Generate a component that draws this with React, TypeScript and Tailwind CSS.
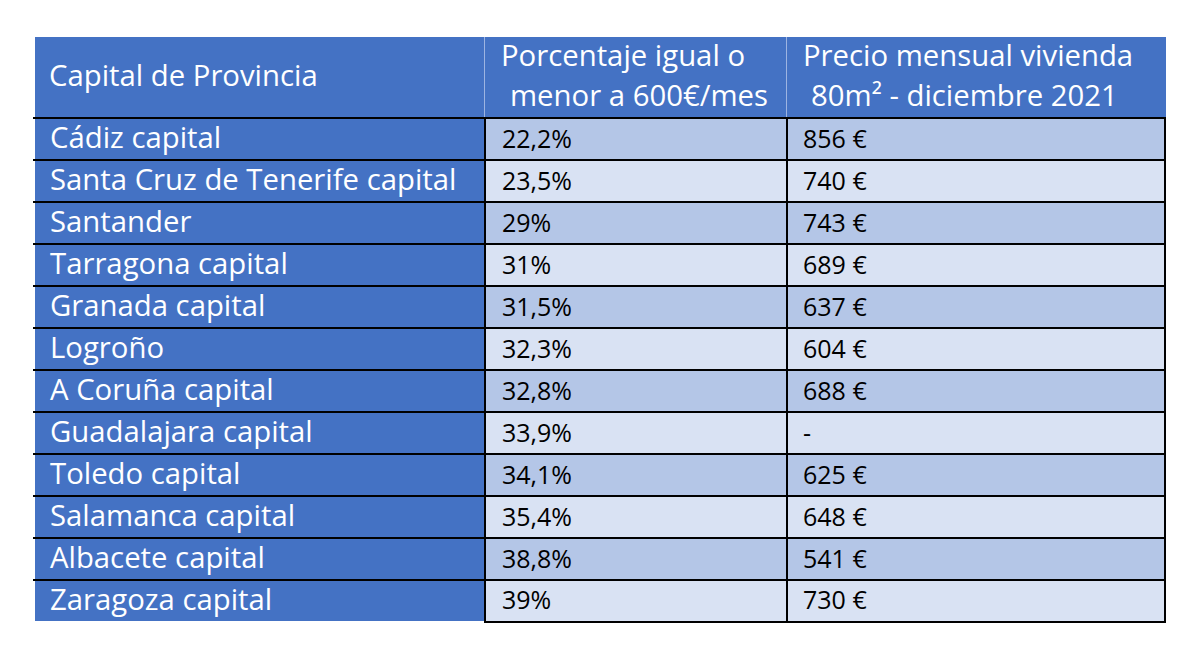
const rows = [
  ['Cádiz capital', '22,2%', '856 €'],
  ['Santa Cruz de Tenerife capital', '23,5%', '740 €'],
  ['Santander', '29%', '743 €'],
  ['Tarragona capital', '31%', '689 €'],
  ['Granada capital', '31,5%', '637 €'],
  ['Logroño', '32,3%', '604 €'],
  ['A Coruña capital', '32,8%', '688 €'],
  ['Guadalajara capital', '33,9%', '-'],
  ['Toledo capital', '34,1%', '625 €'],
  ['Salamanca capital', '35,4%', '648 €'],
  ['Albacete capital', '38,8%', '541 €'],
  ['Zaragoza capital', '39%', '730 €'],
];

export default function App() {
  return (
    <div className="w-[1199px] h-[652px] bg-white pt-[37px] pl-[33px] font-['Open_Sans','Noto_Sans',sans-serif]">
      <div className="w-[1133px]">
        {/* header */}
        <div className="ml-[2px] flex h-[80px] bg-[#4472C4] text-white text-[29.3px]">
          <div className="w-[450px] flex items-center pl-[14px] pb-[3px] border-r border-[#9DB4E2]">
            Capital de Provincia
          </div>
          <div className="w-[302px] flex flex-col justify-center leading-[40px] pb-[5px] border-r border-[#9DB4E2]">
            <span className="pl-[16px]">Porcentaje igual o</span>
            <span className="pl-[25px]">menor a 600€/mes</span>
          </div>
          <div className="flex-1 flex flex-col justify-center leading-[40px] pb-[5px]">
            <span className="pl-[16px]">Precio mensual vivienda</span>
            <span className="pl-[24px]">80m² - diciembre 2021</span>
          </div>
        </div>

        {rows.map(([city, pct, price], i) => {
          const last = i === rows.length - 1;
          const bg = i % 2 === 0 ? 'bg-[#B4C6E7]' : 'bg-[#D9E2F3]';
          return (
            <div key={city}>
              <div className="h-[2px] bg-black" />
              <div className="flex h-[40px]">
                <div className="ml-[2px] w-[449px] bg-[#4472C4] text-white text-[29.3px] flex items-center pl-[15px] pb-[2px]">
                  {city}
                </div>
                <div
                  className={`w-[302px] ${bg} border-l-2 border-black text-black text-[25px] flex items-center pl-[16px] ${
                    last ? 'h-[42px] border-b-2 pb-[2px]' : ''
                  }`}
                >
                  {pct}
                </div>
                <div
                  className={`flex-1 ${bg} border-l-2 border-r-2 border-black text-black text-[25px] flex items-center pl-[15px] ${
                    last ? 'h-[42px] border-b-2 pb-[2px]' : ''
                  }`}
                >
                  {price}
                </div>
              </div>
            </div>
          );
        })}
      </div>
    </div>
  );
}
